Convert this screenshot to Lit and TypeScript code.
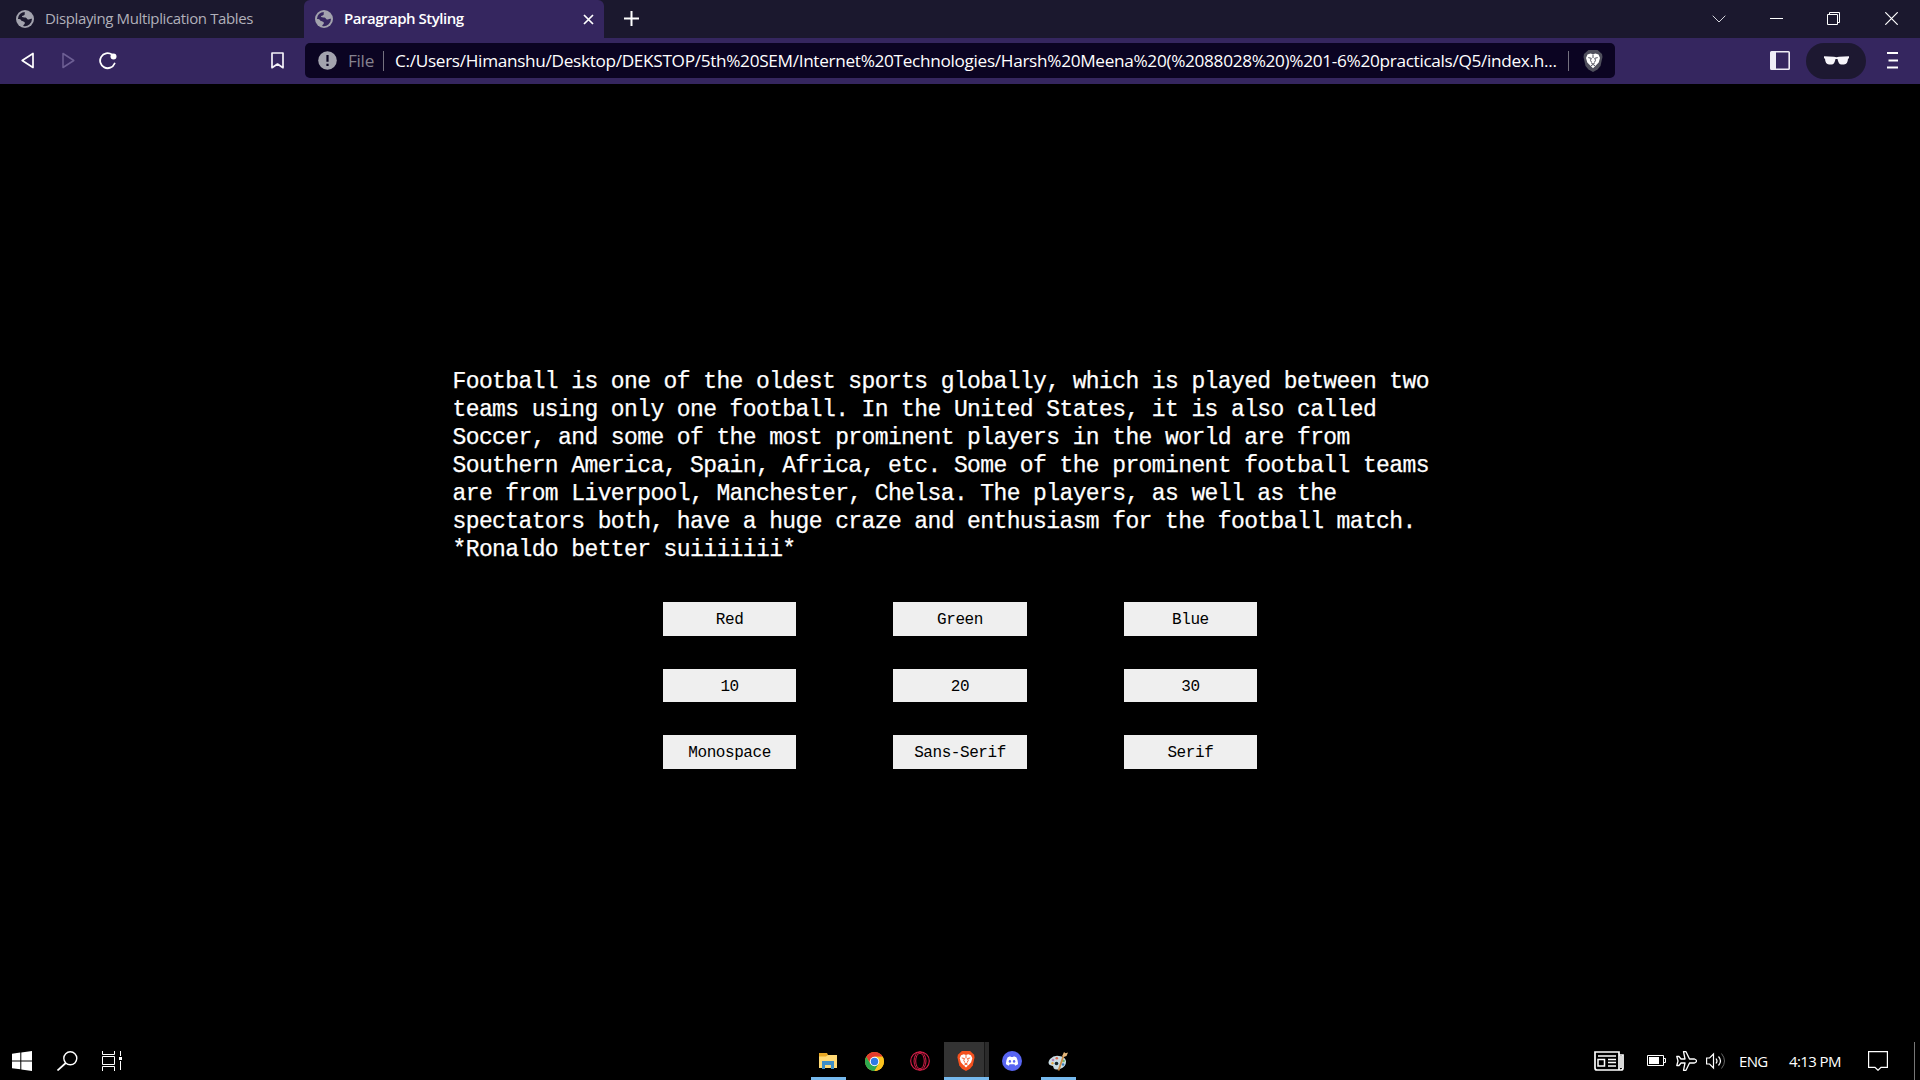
import { LitElement, html, css, svg } from "lit";
import { customElement } from "lit/decorators.js";

const globe = html`<svg class="globe" width="18" height="18" viewBox="0 0 18 18"><circle cx="9" cy="9" r="9" fill="#a3a3ae"/><path class="cut" d="M9 1.9c-.9 1.4.3 2.1-.6 3-1 .9-2.300.4-2.500 1.500-.1 1.200 2 .9 3.600 1 1.500.2 1.300 2 2.600 2.200 1.300.1 1.700-1.200 3.900-.8A7.100 7.100 0 0 1 7.200 15.900c.2-1.500 1.800-1.500 1.700-3-.1-1.800-2.700-1.300-3.600-2.500-.6-.9-1.600-1.400-3.400-1.400A7.100 7.100 0 0 1 9 1.900z"/></svg>`;

const lionHead = svg`<path d="M4.500 4.500 7.500 3.500 10 4.200 12.500 3.500 15.500 4.500 17 8l-1.300 4.500-2.200 2.300L10 18.300l-3.500-3.500-2.200-2.300L3 8z" fill="#fff"/><path class="face" d="M5.300 7.600l3 .7-.8 2 1.100 2.200M14.700 7.600l-3 .7.800 2-1.100 2.200M10 4.500v3.500M8.300 13.200l1.700.8 1.700-.8M8 15.700l2-1.200 2 1.200" fill="none" stroke-width="1"/>`;

@customElement("browser-tabs")
class BrowserTabs extends LitElement {
  static styles = css`
    :host { display: flex; height: 38px; background: #1b182e; color: #b1b0ba; font: 15px/36px "Open Sans", "Noto Sans", sans-serif; }
    .tab { display: flex; align-items: center; box-sizing: border-box; height: 38px; white-space: nowrap; }
    .first { width: 304px; padding-left: 16px; gap: 11px; }
    .active { width: 300px; padding: 0 10px 0 11px; gap: 11px; background: #35265f; color: #fff; border-radius: 6px 6px 0 0; }
    .label { flex: 1; height: 38px; letter-spacing: -0.37px; }
    .active .label { font-weight: 600; letter-spacing: -0.48px; }
    .cut { fill: #1b182e; }
    .active .cut { fill: #35265f; }
    .plus { margin: 11px 0 0 20px; }
    .window { display: flex; margin-left: auto; }
    .cell { width: 57.500px; height: 37px; display: grid; place-items: center; }
    svg { display: block; flex: none; }
  `;
  render() {
    return html`
      <div class="tab first">${globe}<span class="label">Displaying Multiplication Tables</span></div>
      <div class="tab active">${globe}<span class="label">Paragraph Styling</span>
        <svg width="11" height="11" viewBox="0 0 11 11"><path d="M1 1l9 9M10 1l-9 9" stroke="#fff" stroke-width="1.700"/></svg>
      </div>
      <svg class="plus" width="15" height="15" viewBox="0 0 15 15"><path d="M7.500 0v15M0 7.500h15" stroke="#fff" stroke-width="2"/></svg>
      <div class="window">
        <div class="cell"><svg width="14" height="8" viewBox="0 0 14 8"><path d="M.7.7 7 7 13.300.7" fill="none" stroke="#d5d4dc"/></svg></div>
        <div class="cell"><svg width="13" height="13" viewBox="0 0 13 13"><path d="M0 6.500h13" stroke="#fff"/></svg></div>
        <div class="cell"><svg width="13" height="13" viewBox="0 0 13 13"><path d="M.5 2.500h10v10H.5zM2.500 2.500v-2h10v10h-2" fill="none" stroke="#fff"/></svg></div>
        <div class="cell"><svg width="13" height="13" viewBox="0 0 13 13"><path d="M.3.3l12.400 12.400M12.700.3.3 12.700" stroke="#fff" stroke-width="1.200"/></svg></div>
      </div>`;
  }
}

@customElement("browser-toolbar")
class BrowserToolbar extends LitElement {
  static styles = css`
    :host { display: flex; align-items: center; height: 46px; background: #35265f; box-sizing: border-box; padding: 0 21px 1px; }
    svg { display: block; flex: none; }
    .forward { margin-left: 28px; }
    .reload { margin-left: 24px; }
    .mark { margin-left: 154px; }
    .address { box-sizing: border-box; display: flex; align-items: center; width: 1310px; height: 35px; margin-left: 21px; padding: 0 12px 0 13px; border-radius: 5px; background: #0b0422; color: #fff; font: 17.200px/34px "Open Sans", "Noto Sans", sans-serif; white-space: nowrap; }
    .scheme { margin-left: 11px; width: 35px; color: #85828f; letter-spacing: -0.3px; }
    .rule { flex: none; width: 1px; height: 20px; background: #74717f; }
    .url { margin-left: 11px; width: 1173px; letter-spacing: -0.31px; }
    .shield { margin-left: 14px; }
    .face { stroke: #50505d; }
    .panel { margin-left: 155px; }
    .private { display: grid; place-items: center; width: 60px; height: 36px; margin-left: 16px; border-radius: 18px; background: #1d1831; }
    .menu { margin-left: 21px; }
  `;
  render() {
    return html`
      <svg width="13" height="17" viewBox="0 0 13 17"><path d="M12 1.500v14L1.200 8.500z" fill="none" stroke="#fff" stroke-width="1.700" stroke-linejoin="round"/></svg>
      <svg class="forward" width="13" height="17" viewBox="0 0 13 17"><path d="M1 1.500v14L11.800 8.500z" fill="none" stroke="#6d5f94" stroke-width="1.500" stroke-linejoin="round"/></svg>
      <svg class="reload" width="18" height="18" viewBox="0 0 18 18"><path d="M13 2.600A7.500 7.500 0 1 0 15.600 11.500" fill="none" stroke="#fff" stroke-width="1.800" stroke-linecap="round"/><circle cx="14.500" cy="4.500" r="3" fill="#fff"/></svg>
      <svg class="mark" width="13" height="17" viewBox="0 0 13 17"><path d="M1 1h11v14.700L6.500 12 1 15.700z" fill="none" stroke="#f4f2f8" stroke-width="1.700" stroke-linejoin="round"/></svg>
      <div class="address">
        <svg width="19" height="19" viewBox="0 0 19 19"><circle cx="9.500" cy="9.500" r="9.300" fill="#a3a3ae"/><path d="M9.500 4v6.800M9.500 12.700v2.300" stroke="#0b0422" stroke-width="2.200"/></svg>
        <span class="scheme">File</span><i class="rule"></i>
        <span class="url">C:/Users/Himanshu/Desktop/DEKSTOP/5th%20SEM/Internet%20Technologies/Harsh%20Meena%20(%2088028%20)%201-6%20practicals/Q5/index.h...</span>
        <i class="rule"></i>
        <svg class="shield" width="20" height="22" viewBox="0 0 20 22"><path d="M5.500 0h9L19 4l.5 3-2 9-3 3.500L10 22l-4.500-2.500-3-3.500-2-9L1 4z" fill="#50505d"/>${lionHead}</svg>
      </div>
      <svg class="panel" width="20" height="19" viewBox="0 0 20 19"><path fill-rule="evenodd" d="M1.500 0h17Q20 0 20 1.500v16q0 1.500-1.500 1.500h-17Q0 19 0 17.500v-16Q0 0 1.500 0zM6 1.600v15.800h12.400V1.600z" fill="#eeecf5"/></svg>
      <div class="private"><svg width="25" height="9" viewBox="0 0 25 9"><path d="M0 .3 10 .8q2.500.8 5 0L25 .3v2l-1 .5q-.3 5.700-4 5.700h-2.500Q14.500 8.500 13.500 3h-2Q10.500 8.500 7.500 8.500H5Q1.300 8.500 1 2.800L0 2.300z" fill="#f7f5fa"/></svg></div>
      <svg class="menu" width="12" height="17" viewBox="0 0 12 17"><path d="M0 1h11M1.500 8.500H11M0 15.500h11" stroke="#fff" stroke-width="1.900"/></svg>`;
  }
}

@customElement("paragraph-page")
class ParagraphPage extends LitElement {
  static styles = css`
    :host { display: flex; flex-direction: column; align-items: center; flex: 1; background: #000; font-family: "Liberation Mono", monospace; }
    .text { width: 1015px; margin: 284px 0 0; color: #fff; font-size: 23px; line-height: 28.050px; letter-spacing: -0.608px; white-space: pre-line; -webkit-text-stroke: 0.25px #fff; }
    .grid { display: grid; grid-template-columns: repeat(3, 133.500px); grid-auto-rows: 33.600px; gap: 33px 96.900px; margin-top: 37.650px; }
    .choice { border: 0; padding: 3px 0 0; background: #efefef; color: #000; font: 16px/30px "Liberation Mono", monospace; letter-spacing: -0.43px; }
  `;
  render() {
    const choices = ["Red", "Green", "Blue", "10", "20", "30", "Monospace", "Sans-Serif", "Serif"];
    return html`
      <p class="text">Football is one of the oldest sports globally, which is played between two
teams using only one football. In the United States, it is also called
Soccer, and some of the most prominent players in the world are from
Southern America, Spain, Africa, etc. Some of the prominent football teams
are from Liverpool, Manchester, Chelsa. The players, as well as the
spectators both, have a huge craze and enthusiasm for the football match.
*Ronaldo better suiiiiiii*</p>
      <div class="grid">${choices.map((c) => html`<button class="choice">${c}</button>`)}</div>`;
  }
}

@customElement("task-bar")
class TaskBar extends LitElement {
  static styles = css`
    :host { display: grid; grid-template-columns: 806px 1fr 350px; height: 38px; background: #000; color: #fff; font: 15px/38px "Open Sans", "Noto Sans", sans-serif; }
    .left, .apps, .tray { display: flex; align-items: center; height: 38px; }
    .left { padding-left: 12px; gap: 24.500px; }
    svg { display: block; flex: none; }
    .app { width: 35px; height: 38px; margin: 0 6px 0 5px; display: grid; place-items: center; box-sizing: border-box; }
    .app svg { margin-left: -1px; }
    .open { border-bottom: 3px solid #76b9ed; padding-top: 3px; }
    .current { width: 45px; margin: 0 1px 0 0; padding: 3px 0 0 0; background: linear-gradient(90deg, #333 40px, #161616 40px, #161616 41px, #2b2b2b 41px); }
    .current .face { stroke: #f4511e; }
    .news { margin-left: 24px; }
    .battery { margin-left: 23px; }
    .plane { margin-left: 10px; }
    .sound { margin-left: 9px; }
    .lang { margin-left: 13px; width: 50px; letter-spacing: -0.7px; }
    .time { width: 79px; letter-spacing: -0.6px; white-space: nowrap; }
    .edge { width: 1px; height: 38px; margin-left: 26px; background: #777; }
  `;
  render() {
    return html`
      <div class="left">
        <svg width="20" height="20" viewBox="0 0 20 20"><path d="M0 2.800 8.300 1.600V9.400H0zM9.300 1.400 20 0v9.400H9.300zM0 10.400h8.300v7.900L0 17.200zM9.300 10.400H20V20L9.300 18.500z" fill="#fff"/></svg>
        <svg width="21" height="20" viewBox="0 0 21 20"><circle cx="13.300" cy="7.300" r="6.500" fill="none" stroke="#fff" stroke-width="1.400"/><path d="M8.800 12 .5 19.500" stroke="#fff" stroke-width="1.700"/></svg>
        <svg width="20" height="20" viewBox="0 0 20 20" fill="none" stroke="#fff"><path d="M.5 0v3.500h12V0M.5 20v-4.500h12V20M.5 5.500h12v8H.5zM18.500 0v5M18.500 10v9"/><path d="M17 6h3v3h-3z" fill="#fff" stroke="none"/></svg>
      </div>
      <div class="apps">
        <div class="app open"><svg width="18" height="16" viewBox="0 0 18 16"><path d="M0 0h8l1 2h9v13H0z" fill="#e8a825"/><path d="M0 3.500h7L9 2h9v13H0z" fill="#ffd975"/><path d="M3 8h12v8h-3v-4H6v4H3z" fill="#3f8ec6"/></svg></div>
        <div class="app"><svg width="19" height="19" viewBox="0 0 20 20"><circle cx="10" cy="10" r="10" fill="#fcc31e"/><path d="M10 10 5.700 12.500 1.340 5A10 10 0 0 1 18.660 5H10z" fill="#e33b2e"/><path d="M1.340 5A10 10 0 0 0 10 20l4.300-7.500H5.700z" fill="#2da94f"/><path d="M10 5h8.660A10 10 0 0 1 10 20l4.300-7.500z" fill="#fcc31e"/><circle cx="10" cy="10" r="5" fill="#fff"/><circle cx="10" cy="10" r="3.900" fill="#2f7ae5"/></svg></div>
        <div class="app"><svg width="20" height="20" viewBox="0 0 20 20" fill="none" stroke="#d91f49"><circle cx="10" cy="10" r="9.300" stroke-width="1.100"/><ellipse cx="10" cy="10" rx="6" ry="9"/><ellipse cx="10" cy="10" rx="4.300" ry="7.800"/></svg></div>
        <div class="app open current"><svg width="18" height="20" viewBox="0 0 20 22"><path d="M5.500 0h9L19 4l.5 3-2 9-3 3.500L10 22l-4.500-2.500-3-3.500-2-9L1 4z" fill="#f4511e"/>${lionHead}</svg></div>
        <div class="app"><svg width="20" height="20" viewBox="0 0 20 20"><circle cx="10" cy="10" r="10" fill="#5865f2"/><path d="M5.700 6.200 8.200 5.300l.6.8h2.400l.6-.8 2.500.9q2 3.500 1.700 7l-2.800 1.600-.8-1.500H7.600l-.8 1.500L4 13.200q-.3-3.500 1.700-7z" fill="#fff"/><ellipse cx="7.900" cy="10.400" rx="1.200" ry="1.400" fill="#5865f2"/><ellipse cx="12.100" cy="10.400" rx="1.200" ry="1.400" fill="#5865f2"/></svg></div>
        <div class="app open"><svg width="21" height="20" viewBox="0 0 21 20"><path d="M2 8Q6 4 11 5q6 .5 7 5 .5 6-6 8-5 1.500-6.500-1 .5-2.500-2.500-2.500Q-1.500 13 2 8z" fill="#c9dce4"/><circle cx="5" cy="9" r="1.300" fill="#b884bc"/><circle cx="8.800" cy="7.300" r="1.300" fill="#dc6c50"/><circle cx="4.500" cy="12.300" r="1.200" fill="#e4a846"/><circle cx="8.500" cy="12.500" r="1.800" fill="#14272e"/><circle cx="15.500" cy="10" r="1.300" fill="#75b66b"/><circle cx="15" cy="13.500" r="1.300" fill="#397ebd"/><path d="M10.500 19.500 15.500 5" stroke="#c98b45" stroke-width="1.800"/><path d="M14.200 5 16 1l1.500 1.200L20 1.500l-1.500 3.500-2.800 1z" fill="#e5b77a"/></svg></div>
      </div>
      <div class="tray">
        <svg class="news" width="30" height="20" viewBox="0 0 30 20" fill="none" stroke="#fff"><path d="M1 1h24v18H3q-2 0-2-2zM25 4h4v13q0 2-2 2h-2M27 5v12" stroke-width="1.700"/><path d="M4 5h18M4 8.500h6.500v6.500H4zM14 8.500h8M14 11.500h8M14 15h8" stroke-width="1.500"/></svg>
        <svg class="battery" width="19" height="12" viewBox="0 0 19 12"><path d="M.5.5h16v10H.5zM17 3.500h1.500v4H17" fill="none" stroke="#fff"/><path d="M2 2h10v7H2z" fill="#fff"/></svg>
        <svg class="plane" width="21" height="20" viewBox="0 0 21 20"><path d="M7.500.7H10L13.500 8h5q2 .7 2 2t-2 2h-5L10 19.300H7.500L9 12H5l-2 2.500H.8L2 10 .8 5.500H3L5 8h4z" fill="none" stroke="#fff" stroke-width="1.300" stroke-linejoin="round"/></svg>
        <svg class="sound" width="20" height="18" viewBox="0 0 20 18" fill="none" stroke="#fff"><path d="M.6 6h3L7.500 2v14l-3.900-4h-3z" stroke-width="1.200"/><path d="M10 6.500q2 2.500 0 5M12.500 4.500q4 4.500 0 9" stroke-width="1.200"/><path d="M15.500 1.500q6 7.500 0 15" stroke="#666"/></svg>
        <span class="lang">ENG</span><span class="time">4:13 PM</span>
        <svg width="20" height="20" viewBox="0 0 20 20"><path d="M.6.6h18.800v15.800H13L10 19.300 7 16.400H.6z" fill="none" stroke="#fff" stroke-width="1.200"/></svg>
        <i class="edge"></i>
      </div>`;
  }
}

@customElement("app-root")
class AppRoot extends LitElement {
  static styles = css`
    :host { display: flex; flex-direction: column; width: 1920px; height: 1080px; overflow: hidden; background: #000; }
  `;
  render() {
    return html`<browser-tabs></browser-tabs><browser-toolbar></browser-toolbar><paragraph-page></paragraph-page><task-bar></task-bar>`;
  }
}
